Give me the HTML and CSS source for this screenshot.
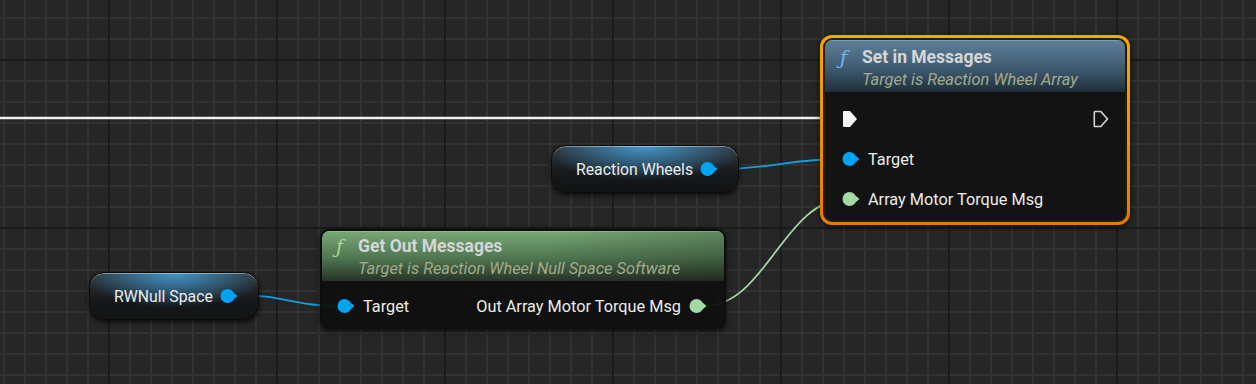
FILE: index.html
```html
<!DOCTYPE html>
<html>
<head>
    <title>Blueprint - Reaction Wheel</title>
    <meta http-equiv="Content-Type" content="text/html; charset=utf-8" />
    <link rel="stylesheet" href="styles.css">
</head>

<body>
    <div class="graph">
        <!-- fios entre os pinos -->
        <svg class="wires" width="1256" height="384" viewBox="0 0 1256 384">
            <path class="wire exec" d="M0 118 H846"/>
            <path class="wire object" d="M716 169 C 776 169, 784 159, 846 159"/>
            <path class="wire object" d="M236 295 C 286 295, 290 306, 342 306"/>
            <path class="wire msg" d="M705 306 C 765 306, 785 199, 846 199"/>
        </svg>

        <!-- variavel: Reaction Wheels -->
        <div class="var-node var-wheels">
            <span class="var-label">Reaction Wheels</span>
            <svg class="pin-data" width="18" height="16" viewBox="0 0 18 16">
                <circle cx="7.5" cy="8" r="7" fill="#00a4f2"/>
                <path d="M14 5 L17.5 8 L14 11 Z" fill="#00a4f2"/>
            </svg>
        </div>

        <!-- variavel: RWNull Space -->
        <div class="var-node var-null">
            <span class="var-label">RWNull Space</span>
            <svg class="pin-data" width="18" height="16" viewBox="0 0 18 16">
                <circle cx="7.5" cy="8" r="7" fill="#00a4f2"/>
                <path d="M14 5 L17.5 8 L14 11 Z" fill="#00a4f2"/>
            </svg>
        </div>

        <!-- funcao: Get Out Messages -->
        <div class="node node-get">
            <div class="node-header header-green">
                <span class="fn-icon fn-green">ƒ</span>
                <div class="header-text">
                    <div class="node-title">Get Out Messages</div>
                    <div class="node-subtitle">Target is Reaction Wheel Null Space Software</div>
                </div>
            </div>
            <div class="node-body">
                <div class="pin-row">
                    <div class="pin">
                        <svg class="pin-data" width="18" height="16" viewBox="0 0 18 16">
                            <circle cx="7.5" cy="8" r="7" fill="#00a4f2"/>
                            <path d="M14 5 L17.5 8 L14 11 Z" fill="#00a4f2"/>
                        </svg>
                        <span>Target</span>
                    </div>
                    <div class="pin">
                        <span>Out Array Motor Torque Msg</span>
                        <svg class="pin-data" width="18" height="16" viewBox="0 0 18 16">
                            <circle cx="7.5" cy="8" r="7" fill="#a3d9a3"/>
                            <path d="M14 5 L17.5 8 L14 11 Z" fill="#a3d9a3"/>
                        </svg>
                    </div>
                </div>
            </div>
        </div>

        <!-- funcao selecionada: Set in Messages -->
        <div class="selected">
            <div class="node node-set">
                <div class="node-header header-blue">
                    <span class="fn-icon fn-blue">ƒ</span>
                    <div class="header-text">
                        <div class="node-title">Set in Messages</div>
                        <div class="node-subtitle">Target is Reaction Wheel Array</div>
                    </div>
                </div>
                <div class="node-body">
                    <div class="pin-row">
                        <svg class="pin-exec" width="16" height="18" viewBox="0 0 16 18">
                            <path d="M2 1 H8 L15 9 L8 17 H2 Q1 17 1 16 V2 Q1 1 2 1 Z" fill="#f4f4f4"/>
                        </svg>
                        <svg class="pin-exec" width="16" height="18" viewBox="0 0 16 18">
                            <path d="M2 1.5 H7.8 L14.5 9 L7.8 16.5 H2 Q1.3 16.5 1.3 15.7 V2.3 Q1.3 1.5 2 1.5 Z" fill="none" stroke="#d4d4d4" stroke-width="1.6"/>
                        </svg>
                    </div>
                    <div class="pin-row">
                        <div class="pin">
                            <svg class="pin-data" width="18" height="16" viewBox="0 0 18 16">
                                <circle cx="7.5" cy="8" r="7" fill="#00a4f2"/>
                                <path d="M14 5 L17.5 8 L14 11 Z" fill="#00a4f2"/>
                            </svg>
                            <span>Target</span>
                        </div>
                    </div>
                    <div class="pin-row">
                        <div class="pin">
                            <svg class="pin-data" width="18" height="16" viewBox="0 0 18 16">
                                <circle cx="7.5" cy="8" r="7" fill="#a3d9a3"/>
                                <path d="M14 5 L17.5 8 L14 11 Z" fill="#a3d9a3"/>
                            </svg>
                            <span>Array Motor Torque Msg</span>
                        </div>
                    </div>
                </div>
            </div>
        </div>
    </div>
</body>
</html>
```

FILE: styles.css
```css
body {
    margin: 0;
    font-family: Roboto, "Liberation Sans", sans-serif;
    background-color: #262626;
    overflow: hidden;
}
.graph {
    position: relative;
    width: 1256px;
    height: 384px;
    background-color: #262626;
    background-image:
        linear-gradient(90deg, #1a1a1a 2px, transparent 2px),
        linear-gradient(#1a1a1a 2px, transparent 2px),
        linear-gradient(90deg, #323232 2px, transparent 2px),
        linear-gradient(#323232 2px, transparent 2px);
    background-size: 168px 168px, 168px 168px, 21px 21px, 21px 21px;
    background-position: 108px 59px, 108px 59px, 3px 17px, 3px 17px;
}
.wires {
    position: absolute;
    left: 0;
    top: 0;
}
.wire {
    fill: none;
}
.wire.exec {
    stroke: #efefef;
    stroke-width: 2.5;
}
.wire.object {
    stroke: #0e9fe2;
    stroke-width: 1.8;
}
.wire.msg {
    stroke: #a3d9a3;
    stroke-width: 1.8;
}

/* variaveis */
.var-node {
    position: absolute;
    display: flex;
    align-items: center;
    gap: 7px;
    box-sizing: border-box;
    height: 48px;
    padding: 0 20px 0 24px;
    border: 1px solid #0b0b0b;
    border-radius: 15px;
    background:
        radial-gradient(ellipse 55% 75% at 50% 0%, rgba(70, 165, 225, 0.85), rgba(70, 160, 215, 0) 100%),
        linear-gradient(#30363b, #16191b 60%, #111314);
    box-shadow: inset 0 1px 0 rgba(255, 255, 255, 0.4), 0 2px 5px rgba(0, 0, 0, 0.7);
}
.var-wheels {
    left: 551px;
    top: 145px;
}
.var-null {
    left: 89px;
    top: 272px;
}
.var-label {
    color: #ececec;
    font-size: 15.8px;
}

/* nos de funcao */
.node {
    box-sizing: border-box;
    border: 2px solid #0d0d0d;
    border-radius: 9px;
    background-color: rgba(14, 15, 14, 0.94);
    overflow: hidden;
}
.node-get {
    position: absolute;
    left: 320px;
    top: 229px;
    width: 406px;
    height: 100px;
    box-shadow: 0 2px 6px rgba(0, 0, 0, 0.7);
}
.node-set {
    width: 304px;
    height: 184px;
    border-color: #2a1a08;
    background-color: #121312;
}
.selected {
    position: absolute;
    left: 820px;
    top: 35px;
    padding: 3px;
    border-radius: 12px;
    background: linear-gradient(#f3aa00, #e27b00);
    box-shadow: 0 2px 6px rgba(0, 0, 0, 0.6);
}
.node-header {
    display: flex;
    align-items: flex-start;
    padding: 7px 12px 2px 15px;
}
.node-get .node-header {
    padding: 5px 12px 2px 14px;
}
.header-blue {
    background: linear-gradient(#5f809a, #3e5a70 55%, #1f2f3a);
    box-shadow: inset 0 1px 0 rgba(255, 255, 255, 0.2);
}
.header-green {
    background: linear-gradient(100deg, rgba(0, 0, 0, 0) 55%, rgba(0, 0, 0, 0.2)),
        linear-gradient(#79a877, #4f7550 55%, #263426);
    box-shadow: inset 0 1px 0 rgba(255, 255, 255, 0.2);
}
.fn-icon {
    width: 22px;
    flex: none;
    font-family: "DejaVu Serif", serif;
    font-style: italic;
    font-size: 19px;
    line-height: 20px;
}
.fn-blue {
    color: #72b9ec;
}
.fn-green {
    color: #a6dc92;
}
.node-title {
    color: #d6d6d6;
    font-size: 17.5px;
    font-weight: bold;
    line-height: 20px;
}
.node-subtitle {
    margin-top: 3px;
    color: #a2ab8c;
    font-size: 16.4px;
    font-style: italic;
    line-height: 20px;
    white-space: nowrap;
}
.node-body {
    padding: 7px 16px 1px 17px;
}
.node-get .node-body {
    padding: 5px 17px 1px 15px;
}
.pin-row {
    display: flex;
    align-items: center;
    justify-content: space-between;
    height: 40px;
}
.pin {
    display: flex;
    align-items: center;
    gap: 8px;
    color: #ececec;
    font-size: 16.3px;
}
.pin-data,
.pin-exec {
    display: block;
    flex: none;
}
```
